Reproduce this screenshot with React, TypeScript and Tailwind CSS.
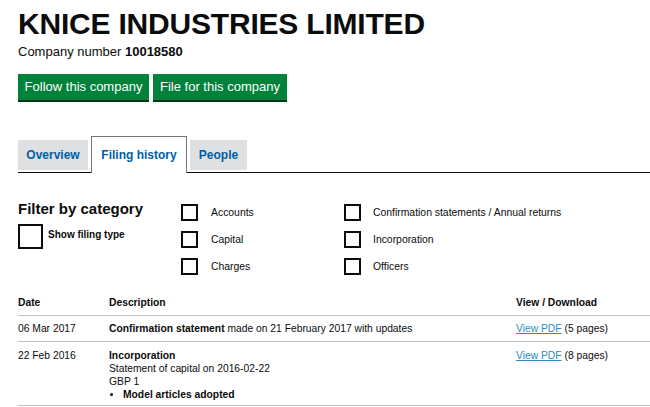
const filters = [
  ["Accounts", "Confirmation statements / Annual returns"],
  ["Capital", "Incorporation"],
  ["Charges", "Officers"],
];

const Checkbox = ({ big }: { big?: boolean }) => (
  <span
    className={`block shrink-0 border-2 border-[#0b0c0c] bg-white ${
      big ? "w-[25px] h-[25px]" : "w-[17px] h-[17px]"
    }`}
  />
);

export default function App() {
  return (
    <div className="w-[650px] h-[407px] overflow-hidden bg-white pl-[18px] text-[#0b0c0c] font-['Liberation_Sans',Arial,sans-serif]">
      <h1 className="pt-[7px] text-[30px] leading-[34px] font-bold tracking-[-0.2px]">
        KNICE INDUSTRIES LIMITED
      </h1>
      <p className="mt-[3px] text-[13px] leading-[16px]">
        Company number <strong>10018580</strong>
      </p>

      <div className="mt-[14px] flex gap-[4px]">
        <button className="h-[26px] w-[131px] bg-[#00823b] text-white text-[13px] shadow-[0_2px_0_#003618]">
          Follow this company
        </button>
        <button className="h-[26px] w-[134px] bg-[#00823b] text-white text-[13px] shadow-[0_2px_0_#003618]">
          File for this company
        </button>
      </div>

      <ul className="mt-[36px] flex items-end gap-[3px] border-b border-[#0b0c0c]">
        <li className="mb-[2px] h-[30px] w-[70px] bg-[#dee0e2] flex items-center justify-center text-[12px] font-bold text-[#005ea5]">
          Overview
        </li>
        <li className="-mb-px h-[37px] w-[96px] border border-b-0 border-[#6f777b] bg-white flex items-center justify-center text-[12px] font-bold text-[#005ea5]">
          Filing history
        </li>
        <li className="mb-[2px] h-[30px] w-[57px] bg-[#dee0e2] flex items-center justify-center text-[12px] font-bold text-[#005ea5]">
          People
        </li>
      </ul>

      <div className="mt-[27px] flex">
        <div className="w-[163px]">
          <h2 className="text-[15px] leading-[18px] font-bold">Filter by category</h2>
          <label className="mt-[6px] flex items-start gap-[5px]">
            <Checkbox big />
            <span className="mt-[3px] text-[10px] font-bold">Show filing type</span>
          </label>
        </div>
        <div className="mt-[4px] flex flex-col gap-[10px]">
          {filters.map(([a, b]) => (
            <div key={a} className="flex text-[10.4px]">
              <label className="w-[163px] flex items-center gap-[13px]">
                <Checkbox />
                {a}
              </label>
              <label className="flex items-center gap-[12px]">
                <Checkbox />
                {b}
              </label>
            </div>
          ))}
        </div>
      </div>

      <table className="mt-[21px] w-full text-[10.3px] leading-[13px] border-collapse">
        <thead>
          <tr className="border-b border-[#bfc1c3] text-left">
            <th className="w-[91px] pb-[6px] font-bold">Date</th>
            <th className="pb-[6px] font-bold">Description</th>
            <th className="w-[134px] pb-[6px] font-bold">View / Download</th>
          </tr>
        </thead>
        <tbody className="align-top">
          <tr className="border-b border-[#bfc1c3]">
            <td className="py-[6px]">06 Mar 2017</td>
            <td className="py-[6px]">
              <strong>Confirmation statement</strong> made on 21 February 2017 with updates
            </td>
            <td className="py-[6px]">
              <a className="text-[#2b8cc4] underline">View PDF</a> (5 pages)
            </td>
          </tr>
          <tr className="border-b border-[#bfc1c3]">
            <td className="pt-[7px] pb-[4px]">22 Feb 2016</td>
            <td className="pt-[7px] pb-[4px]">
              <strong>Incorporation</strong>
              <div>Statement of capital on 2016-02-22</div>
              <div>GBP 1</div>
              <ul className="list-disc pl-[14px] font-bold">
                <li>Model articles adopted</li>
              </ul>
            </td>
            <td className="pt-[7px] pb-[4px]">
              <a className="text-[#2b8cc4] underline">View PDF</a> (8 pages)
            </td>
          </tr>
        </tbody>
      </table>
    </div>
  );
}
